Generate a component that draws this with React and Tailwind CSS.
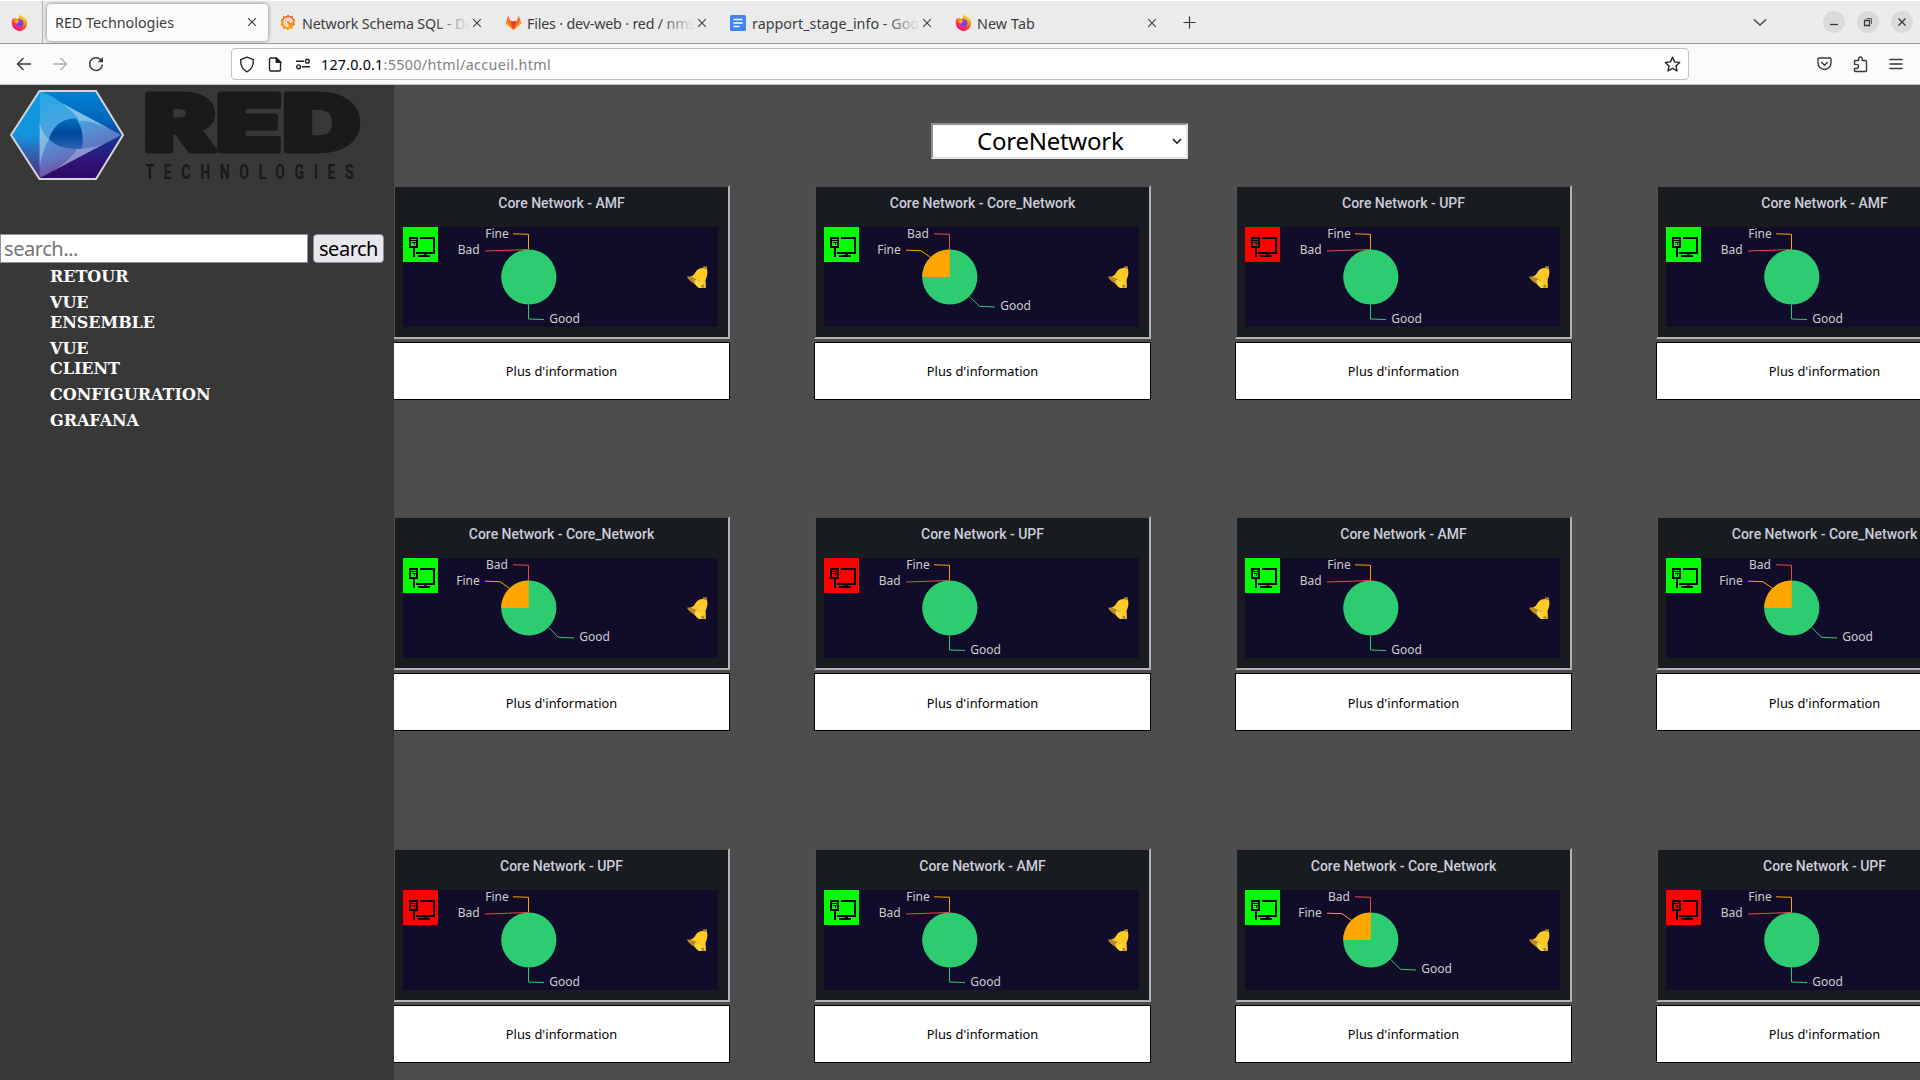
import { useLayoutEffect, useRef, useState } from "react";

// Text whose tracking is adjusted so that it fills the given width.
function Fit({ w, className = "", children }) {
  const ref = useRef(null);
  const [spacing, setSpacing] = useState(0);
  useLayoutEffect(() => {
    const el = ref.current;
    const natural = el.getBoundingClientRect().width - spacing * el.textContent.length;
    setSpacing((w - natural) / el.textContent.length);
  }, [w]);
  return (
    <span ref={ref} className={`inline-block whitespace-nowrap ${className}`} style={{ letterSpacing: `${spacing}px` }}>
      {children}
    </span>
  );
}

const ui = "font-['Noto_Sans',sans-serif]";

function Firefox() {
  return (
    <svg width="17" height="17" viewBox="0 0 17 17">
      <defs>
        <linearGradient id="fx" x1="0.8" y1="0" x2="0.3" y2="1">
          <stop offset="0" stopColor="#fff44f" />
          <stop offset="0.4" stopColor="#ff980e" />
          <stop offset="0.7" stopColor="#ff3647" />
          <stop offset="1" stopColor="#e31587" />
        </linearGradient>
      </defs>
      <path d="M9.6 0.3C10 2 12.4 2.6 13.4 4.6L13.8 3.6C15.6 5.4 16.4 7.2 16.3 9.2A7.8 7.8 0 0 1 0.7 9C0.6 6.8 1.3 5 2.4 3.6L3 5L4.4 3.4L5.4 5C7 5 8 3.4 8.2 2.2Z" fill="url(#fx)" />
      <circle cx="8.6" cy="9" r="3.7" fill="#7542e5" />
      <path d="M3.4 6.6C5.4 5.4 7.6 6 8.8 7.4C7 7.4 6.4 8.6 7 9.6C4.8 10 4 8.4 3.4 6.6Z" fill="#ffa436" />
    </svg>
  );
}

function Grafana() {
  return (
    <svg width="16" height="17" viewBox="0 0 16 17" fill="none">
      <defs>
        <linearGradient id="gf" x1="0" y1="0" x2="0" y2="1">
          <stop offset="0" stopColor="#f05a28" />
          <stop offset="1" stopColor="#fbb01c" />
        </linearGradient>
      </defs>
      <path d="M8 0.6L9.8 2.3L12.6 1.8L13 4.4L15.4 6L14.2 8.4L15.4 10.8L13 12.2L12.4 14.8L9.8 14.6L8 16.5L6 14.8L3.2 15.2L2.8 12.4L0.6 11L1.8 8.6L0.6 6L3 4.6L3.4 2L6.2 2.4Z" fill="url(#gf)" />
      <path d="M12.2 8.3A4.1 4.1 0 1 0 8.8 12.2M10.3 9A2.2 2.2 0 1 0 8.4 10.4" stroke="#fff" strokeWidth="1.3" />
    </svg>
  );
}

function Gitlab() {
  return (
    <svg width="17" height="16" viewBox="0 0 17 16">
      <path d="M3.2 0.8L5.6 6.2H11.4L13.8 0.8L16.4 8.6L8.5 15L0.6 8.6Z" fill="#fc6d26" />
      <path d="M5.6 6.2H11.4L8.5 15Z" fill="#e24329" />
      <path d="M0.6 8.6L2 6.4L8.5 15ZM16.4 8.6L15 6.4L8.5 15Z" fill="#fca326" />
    </svg>
  );
}

function Docs() {
  return (
    <svg width="16" height="16" viewBox="0 0 16 16">
      <rect width="16" height="16" rx="1.5" fill="#4285f4" />
      <path d="M3.5 4.5H12.5M3.5 8H12.5M3.5 11.5H9.5" stroke="#fff" strokeWidth="1.7" />
    </svg>
  );
}

function Close() {
  return (
    <svg width="10" height="10" viewBox="0 0 10 10" className="shrink-0">
      <path d="M1.2 1.2L8.8 8.8M8.8 1.2L1.2 8.8" stroke="#3f3f3f" strokeWidth="1.1" />
    </svg>
  );
}

function Tab({ icon, label, w, fade }) {
  return (
    <div className="flex h-full w-[225px] shrink-0 items-center pt-px pr-[15px] pl-2">
      <span className="flex w-[22px] shrink-0">{icon}</span>
      <div className="relative mr-auto w-[168px] overflow-hidden">
        <Fit w={w} className="text-[14.3px] leading-5 text-[#3d3d3d]">{label}</Fit>
        {fade && <div className="absolute inset-y-0 right-0 w-9 bg-gradient-to-r from-[#ebebeb]/0 to-[#ebebeb]" />}
      </div>
      <Close />
    </div>
  );
}

function WindowButton({ children }) {
  return (
    <span className="flex size-[22px] items-center justify-center rounded-full bg-[#dadada]">
      <svg width="12" height="12" viewBox="0 0 12 12" fill="none" stroke="#3a3a3a" strokeWidth="1.3">{children}</svg>
    </span>
  );
}

function TabStrip() {
  return (
    <div className="flex h-11 items-center border-t border-b border-t-white border-b-[#9c9c9c] bg-[#ebebeb]">
      <div className="flex h-full w-[43px] shrink-0 items-center border-r border-[#b5b5b5] pl-[11px]">
        <Firefox />
      </div>
      <div className="ml-1 flex h-[37px] w-[221px] shrink-0 items-center justify-between rounded bg-[#fbfbfb] pr-[11px] pl-2 shadow-[0_0_4px_rgba(0,0,0,0.45)]">
        <Fit w={119} className="pt-px text-[14.3px] leading-5 text-[#3d3d3d]">RED Technologies</Fit>
        <Close />
      </div>
      <div className="ml-1 flex h-full">
        <Tab icon={<Grafana />} label="Network Schema SQL - Da" w={171} fade />
        <Tab icon={<Gitlab />} label="Files · dev-web · red / nms" w={168} fade />
        <Tab icon={<Docs />} label="rapport_stage_info - Goo" w={167} fade />
        <Tab icon={<Firefox />} label="New Tab" w={58} />
      </div>
      <svg width="13" height="13" viewBox="0 0 13 13" className="ml-[11px]">
        <path d="M6.5 0.5V12.5M0.5 6.5H12.5" stroke="#333" strokeWidth="1.2" />
      </svg>
      <svg width="14" height="9" viewBox="0 0 14 9" className="mr-[56px] ml-auto" fill="none">
        <path d="M1 1.5L7 7L13 1.5" stroke="#444" strokeWidth="1.4" />
      </svg>
      <div className="mr-[7px] flex gap-3">
        <WindowButton><path d="M2 8.5H10" /></WindowButton>
        <WindowButton><path d="M2.5 4.5H7.5V9.5H2.5Z" /><path d="M4.5 2.5H9.5V8" strokeWidth="0.8" /></WindowButton>
        <WindowButton><path d="M2.5 2.5L9.5 9.5M9.5 2.5L2.5 9.5" /></WindowButton>
      </div>
    </div>
  );
}

function Toolbar() {
  return (
    <div className="flex h-[41px] items-center border-b border-[#c4c4c4] bg-[#fbfbfb]">
      <svg width="16" height="16" viewBox="0 0 16 16" className="ml-4" fill="none" stroke="#3a3a3a" strokeWidth="1.4">
        <path d="M15 8H1.5M7.5 2L1.5 8L7.5 14" />
      </svg>
      <svg width="16" height="16" viewBox="0 0 16 16" className="ml-5" fill="none" stroke="#b0b0b0" strokeWidth="1.4">
        <path d="M1 8H14.5M8.5 2L14.5 8L8.5 14" />
      </svg>
      <svg width="16" height="16" viewBox="0 0 16 16" className="ml-5" fill="none" stroke="#3a3a3a" strokeWidth="1.5">
        <path d="M14.4 8.6A6.4 6.4 0 1 1 12.6 3.6L14.3 5.3" /><path d="M15 1V6.3H9.7Z" fill="#3a3a3a" stroke="none" />
      </svg>
      <div className="ml-[127px] flex h-8 w-[1458px] shrink-0 items-center rounded border border-[#c3c3c3] bg-white pr-[7px] pl-[7px]">
        <svg width="16" height="17" viewBox="0 0 16 17" fill="none" stroke="#222" strokeWidth="1.4">
          <path d="M8 1.2L14.3 3.6C14.6 9.4 12.6 13.6 8 15.8C3.4 13.6 1.4 9.4 1.7 3.6Z" strokeLinejoin="round" />
        </svg>
        <svg width="14" height="15" viewBox="0 0 14 15" className="ml-[13px]" fill="none" stroke="#222" strokeWidth="1.4">
          <path d="M8.5 1H3Q1.5 1 1.5 2.5V12.5Q1.5 14 3 14H11Q12.5 14 12.5 12.5V5Z" strokeLinejoin="round" />
          <path d="M8.2 1V5.3H12.5Z" fill="#222" />
        </svg>
        <svg width="16" height="12" viewBox="0 0 16 12" className="ml-[13px]" fill="none" stroke="#222" strokeWidth="1.4">
          <path d="M1 3.2H9M7 8.8H15" /><circle cx="12.4" cy="3.2" r="1.9" /><circle cx="3.6" cy="8.8" r="1.9" />
        </svg>
        <div className="ml-[10px] flex pt-px text-[14.3px] leading-5">
          <Fit w={62.5} className="text-black">127.0.0.1</Fit>
          <Fit w={167.5} className="text-[#808080]">:5500/html/accueil.html</Fit>
        </div>
        <svg width="17" height="17" viewBox="0 0 17 17" className="ml-auto" fill="none" stroke="#222" strokeWidth="1.4">
          <path d="M8.5 1.3L10.6 5.9L15.7 6.4L11.9 9.9L13 15L8.5 12.4L4 15L5.1 9.9L1.3 6.4L6.4 5.9Z" strokeLinejoin="round" />
        </svg>
      </div>
      <svg width="15" height="14" viewBox="0 0 15 14" className="mr-[21px] ml-auto" fill="none" stroke="#3a3a3a" strokeWidth="1.4">
        <path d="M2 1H13Q14 1 14 2V6A6.5 6.5 0 0 1 1 6V2Q1 1 2 1Z" /><path d="M4.2 5L7.5 8.2L10.8 5" />
      </svg>
      <svg width="15" height="17" viewBox="0 0 15 17" className="mr-[21px]" fill="none" stroke="#3a3a3a" strokeWidth="1.4">
        <path d="M1.5 7.5V5Q1.5 4.5 2 4.5H5.6V2.8A1.8 1.8 0 0 1 9.2 2.8V4.5H12.5Q13.5 4.5 13.5 5.5V14.5Q13.5 15.5 12.5 15.5H2.5Q1.5 15.5 1.5 14.5V12.5H3.5A2 2 0 0 0 3.5 8.4H1.5Z" strokeLinejoin="round" />
      </svg>
      <svg width="14" height="12" viewBox="0 0 14 12" className="mr-[17px]" stroke="#3a3a3a" strokeWidth="1.3">
        <path d="M0.5 1.5H13.5M0.5 6H13.5M0.5 10.5H13.5" />
      </svg>
    </div>
  );
}

function Logo() {
  return (
    <svg width="384" height="103" viewBox="0 85 384 103" className="block">
      <defs>
        <linearGradient id="hexBase" x1="0" y1="0" x2="0" y2="1">
          <stop offset="0" stopColor="#0083d6" />
          <stop offset="0.35" stopColor="#0064b8" />
          <stop offset="0.6" stopColor="#1c2b8c" />
          <stop offset="0.8" stopColor="#33117a" />
          <stop offset="1" stopColor="#2b0a63" />
        </linearGradient>
        <linearGradient id="hexLeft" x1="0" y1="0" x2="0" y2="1">
          <stop offset="0" stopColor="#0a9be0" />
          <stop offset="0.5" stopColor="#1394dc" />
          <stop offset="0.8" stopColor="#3c4fa4" />
          <stop offset="1" stopColor="#5a2a86" />
        </linearGradient>
        <linearGradient id="hexPlay" x1="0" y1="0" x2="0.3" y2="1">
          <stop offset="0" stopColor="#1fa9e6" />
          <stop offset="0.45" stopColor="#4ba3e0" />
          <stop offset="0.75" stopColor="#5f78c2" />
          <stop offset="1" stopColor="#7a3f94" />
        </linearGradient>
        <linearGradient id="hexEye" x1="0" y1="0" x2="0" y2="1">
          <stop offset="0" stopColor="#0070bd" />
          <stop offset="0.5" stopColor="#00489c" />
          <stop offset="1" stopColor="#2f62b4" />
        </linearGradient>
      </defs>
      <path d="M11 135L39.5 91H96L123 135L96 179H39.5Z" fill="url(#hexBase)" />
      <path d="M11 135L39.5 91V179Z" fill="url(#hexLeft)" />
      <path d="M39.5 91L121 135L39.5 178Z" fill="url(#hexPlay)" />
      <path d="M39.5 91C60 99 74 112 80 121C88 120 104 125 121 135Z" fill="#a4d2f0" opacity="0.6" />
      <path d="M121 135C104 146 88 149 77 149C72 157 60 169 39.5 178L72 161Z" fill="#aab4e4" opacity="0.55" />
      <path d="M39.5 122C42 131 45 136 49 139C44 148 40 160 39.5 170Z" fill="#b6dcf4" opacity="0.5" />
      <path d="M49 139C53 126 62 118 76 118.500C82 126 84 138 82 148.500C66 150 55 146 49 139Z" fill="url(#hexEye)" />
      <path d="M11 135L39.500 91H96L123 135L96 179H39.500Z" fill="none" stroke="#d5d5d8" strokeWidth="2" />
      <text x="143.500" y="151.300" textLength="217" lengthAdjust="spacingAndGlyphs" fill="#1a1a18" stroke="#1a1a18" strokeWidth="5" strokeLinejoin="round" className="font-['Inter',sans-serif] text-[78.500px] font-black">RED</text>
      <g transform="translate(145.500 178.500) scale(0.72 1)">
        <text x="0" y="0" textLength="289" lengthAdjust="spacing" fill="#1a1a18" className="font-['Roboto',sans-serif] text-[19.500px] font-bold">TECHNOLOGIES</text>
      </g>
    </svg>
  );
}

const nav = [
  [["RETOUR", 78.5]],
  [["VUE", 38.5], ["ENSEMBLE", 105]],
  [["VUE", 38.5], ["CLIENT", 70]],
  [["CONFIGURATION", 160.5]],
  [["GRAFANA", 89]],
];

function Sidebar() {
  return (
    <aside className="relative z-10 w-[394px] shrink-0 bg-[#383838]">
      <Logo />
      <div className="mt-[46px] flex gap-[5px] text-[20px]">
        <div className="flex h-[29px] w-[308px] items-center border border-[#8f8f9d] bg-white pl-[3px] leading-none text-[#757575]">
          <Fit w={74}>search...</Fit>
        </div>
        <button className="flex h-[29px] w-[71px] items-center justify-center rounded border border-[#8f8f9d] bg-[#e9e9ed] leading-none text-black">
          <Fit w={59}>search</Fit>
        </button>
      </div>
      <ul className="mt-1 ml-[50px] flex flex-col gap-1.5 font-['DejaVu_Serif',serif] text-[16px] leading-5 font-bold text-white">
        {nav.map((lines, i) => (
          <li key={i} className="flex flex-col items-start">
            {lines.map(([text, w]) => <Fit key={text} w={w}>{text}</Fit>)}
          </li>
        ))}
      </ul>
    </aside>
  );
}

function Computer({ down }) {
  return (
    <svg width="35" height="35" viewBox="0 0 35 35" shapeRendering="crispEdges">
      <rect width="35" height="35" fill={down ? "#ff0000" : "#00ff00"} />
      <path d="M6 10H15V21H6ZM8 12V19H13V12Z" fillRule="evenodd" />
      <path d="M8 13H13V14H8ZM9 15H13V16H9ZM11 15H12V18H11ZM10 21H12V30H10ZM17 10H32V27H13V25H30V12H17ZM21 27H24V28H21ZM15 28H27V30H15V28Z" />
    </svg>
  );
}

function Pie({ split }) {
  const label = "font-['Noto_Sans',sans-serif] text-[12px]";
  return (
    <svg width="315" height="100" viewBox="0 0 315 100" className="absolute inset-0 overflow-visible" fill="none">
      <circle cx="125.800" cy="50" r="27.600" fill="#2ecc71" />
      {split ? (
        <>
          <path d="M125.800 50V22.400A27.600 27.600 0 0 0 98.200 50Z" fill="#ffa500" />
          <path d="M110 6.800L125.500 7.300V22.500" stroke="#e74c3c" />
          <path d="M82 23.200L97 23.700L106.500 30.300" stroke="#ffa500" />
          <path d="M145.800 69.500L155.500 79.300L171 80" stroke="#2ecc71" />
          <g fill="#ccc" className={label}>
            <text x="83" y="11.300">Bad</text>
            <text x="53.300" y="27.200">Fine</text>
            <text x="176.200" y="83.200">Good</text>
          </g>
        </>
      ) : (
        <>
          <path d="M110 6.800L125.500 7.300V22.500" stroke="#ffa500" />
          <path d="M82 24L97 23.500L125.500 22.500" stroke="#e74c3c" />
          <path d="M125.500 77.500V92L141 92.500" stroke="#2ecc71" />
          <g fill="#ccc" className={label}>
            <text x="82.200" y="11.300">Fine</text>
            <text x="54.800" y="27.200">Bad</text>
            <text x="146.200" y="96.200">Good</text>
          </g>
        </>
      )}
    </svg>
  );
}

function Bell() {
  return (
    <svg width="22" height="23" viewBox="0 0 22 23" className="absolute top-[39px] left-[284px]">
      <path d="M16 0.300H20V4H16Z" fill="#a87a22" />
      <path d="M0.500 11.500C4.500 10.500 7 9 8 7C9.500 4 12 1.800 15.500 2L20 3.200C21.200 8 19.500 11.500 18.500 14L19 21L10 19Z" fill="#ffca28" />
      <path d="M0 10.800C3.500 10 8 12 12 14.500C15.500 16.700 18.500 19.500 19 21.800C14 22.300 3 17 0 10.800Z" fill="#b98a26" />
      <path d="M7.500 16.500L10 14.300L14 15.500L18.300 19.500V22H12C10 21 8.200 19 7.500 16.500Z" fill="#fdd835" />
      <path d="M7.500 15.300L10.500 13.800" stroke="#fff3b0" />
      <circle cx="15.800" cy="20.300" r="1.700" fill="#b98a26" />
    </svg>
  );
}

const kinds = {
  AMF: { title: "Core Network - AMF", w: 126.5 },
  CORE: { title: "Core Network - Core_Network", w: 185.5, split: true },
  UPF: { title: "Core Network - UPF", w: 123 },
};

function Card({ kind }) {
  const { title, w, split } = kinds[kind];
  return (
    <div className="w-[337px] shrink-0">
      <div className="h-[154px] border-2 border-t-[#4b4b4b] border-r-[#b2b2b4] border-b-[#b2b2b4] border-l-[#4f4f50] bg-[#181b1f] px-2">
        <h2 className="flex h-10 justify-center pt-[6px] font-['Roboto',sans-serif] text-[14px] leading-5 font-medium text-[#ccccdc]">
          <Fit w={w}>{title}</Fit>
        </h2>
        <div className="relative h-[100px] w-[315px] bg-[#110c2a]">
          <Pie split={split} />
          <div className="relative w-[35px]"><Computer down={kind === "UPF"} /></div>
          <Bell />
        </div>
      </div>
      <button className="mt-[3px] flex h-[58px] w-full items-center justify-center border border-black bg-white pt-0.5 text-[12.800px] text-black">
        <Fit w={111.5}>Plus d'information</Fit>
      </button>
    </div>
  );
}

const rows = [
  ["AMF", "CORE", "UPF", "AMF"],
  ["CORE", "UPF", "AMF", "CORE"],
  ["UPF", "AMF", "CORE", "UPF"],
];

export default function App() {
  return (
    <div className={`flex h-[1080px] w-[1920px] flex-col overflow-hidden bg-[#4d4d4d] ${ui}`}>
      <TabStrip />
      <Toolbar />
      <div className="flex min-h-0 flex-1">
        <Sidebar />
        <main className="-ml-px min-w-0 flex-1 overflow-hidden">
          <div className="mt-[38px] ml-[538px] flex h-9 w-[257px] items-center border-2 border-t-[#8f8f90] border-r-[#e3e3e3] border-b-[#e3e3e3] border-l-[#8f8f90] bg-white pl-[44px] text-[24px] leading-none text-black">
            <Fit w={146.5}>CoreNetwork</Fit>
            <svg width="10" height="7" viewBox="0 0 10 7" className="mr-1 ml-auto" fill="none">
              <path d="M1 1L5 5.200L9 1" stroke="#111" strokeWidth="1.500" />
            </svg>
          </div>
          <div className="mt-[26px] flex flex-col gap-[116.300px]">
            {rows.map((row, i) => (
              <div key={i} className="flex h-[215px] gap-[84px]">
                {row.map((kind, j) => <Card key={j} kind={kind} />)}
              </div>
            ))}
          </div>
        </main>
      </div>
    </div>
  );
}
